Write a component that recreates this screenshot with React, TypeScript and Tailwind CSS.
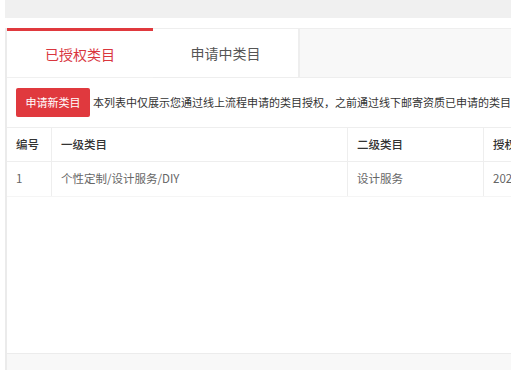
const FONT = { fontFamily: '"Noto Sans CJK SC", "Noto Sans", sans-serif' };

const cols = [
  { key: "no", title: "编号", w: "w-[44px]" },
  { key: "first", title: "一级类目", w: "w-[296px]" },
  { key: "second", title: "二级类目", w: "w-[136px]" },
  { key: "time", title: "授权时间", w: "w-[160px]" },
];

const rows = [{ no: "1", first: "个性定制/设计服务/DIY", second: "设计服务", time: "2020-06-18 10:21:35" }];

export default function App() {
  return (
    <div className="h-[370px] w-full overflow-hidden bg-white" style={FONT}>
      <div className="ml-[5px] h-[18px] bg-[#f0f0f0]" />
      <div className="ml-[5px] mt-[10px] flex h-[342px] flex-col border-l-2 border-[#ebebeb]">
        {/* tabs */}
        <div className="flex h-[50px] shrink-0">
          <div className="flex w-[146px] items-center justify-center border-t-[3px] border-b border-t-[#e0393e] border-b-[#f0f0f0] bg-white text-[14px] text-[#d9363e]">
            已授权类目
          </div>
          <div className="flex w-[146px] items-center justify-center border-y border-r border-[#eeeeee] bg-white text-[14px] text-[#555]">
            申请中类目
          </div>
          <div className="flex-1 border-y border-l border-[#eeeeee] bg-[#f8f8f8]" />
        </div>

        {/* content */}
        <div className="flex min-h-0 flex-1 flex-col border-b border-[#ececec]">
          <div className="flex items-center gap-[3px] pl-[9px] pt-[10px]">
            <button className="h-[29px] w-[74px] shrink-0 rounded-[2px] bg-[#e0393e] text-[11px] text-white">
              申请新类目
            </button>
            <p className="whitespace-nowrap text-[11px] text-[#333]">
              本列表中仅展示您通过线上流程申请的类目授权，之前通过线下邮寄资质已申请的类目暂不展示
            </p>
          </div>

          <div className="mt-[10px] w-max text-[11.5px]">
            <div className="flex h-[35px] border-y border-[#eeeeee] font-medium text-[#333]">
              {cols.map((c, i) => (
                <div key={c.key} className={`${c.w} flex items-center pl-[9px] ${i > 0 ? "border-l border-[#eeeeee]" : ""}`}>
                  {c.title}
                </div>
              ))}
            </div>
            {rows.map((r) => (
              <div key={r.no} className="flex h-[35px] border-b border-[#f5f5f5] text-[#666]">
                {cols.map((c, i) => (
                  <div key={c.key} className={`${c.w} flex items-center pl-[9px] ${i > 0 ? "border-l border-[#eeeeee]" : ""}`}>
                    {r[c.key as keyof typeof r]}
                  </div>
                ))}
              </div>
            ))}
          </div>
        </div>
        <div className="h-[16px] shrink-0 bg-[#f8f8f8]" />
      </div>
    </div>
  );
}
